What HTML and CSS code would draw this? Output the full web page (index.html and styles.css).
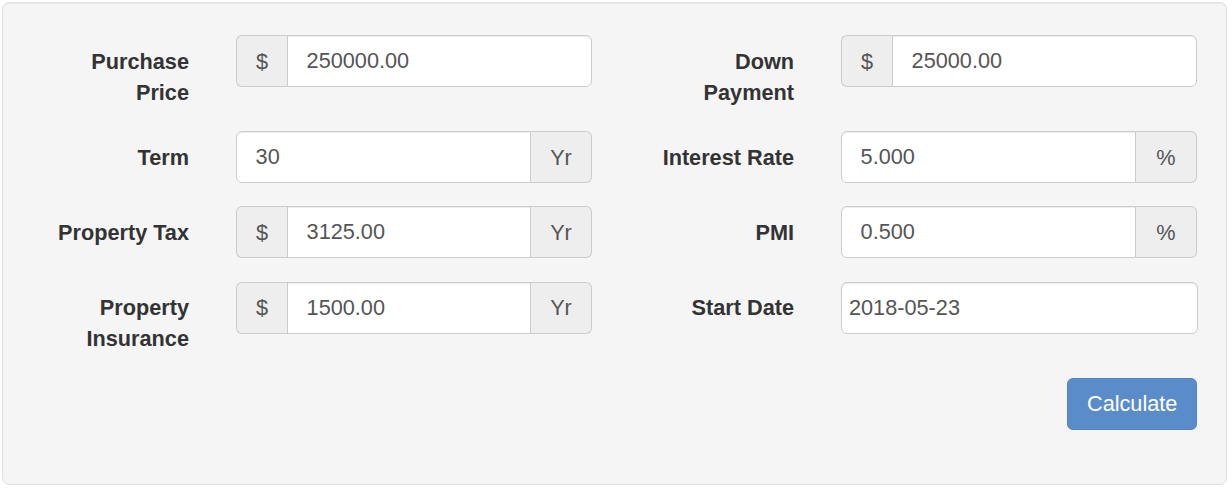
FILE: index.html
```html
<!DOCTYPE html>
<html>
<head>
<meta charset="utf-8">
<link rel="stylesheet" href="styles.css">
</head>
<body>
<form class="well">
  <div class="row">
    <div class="group">
      <label class="lbl">Purchase<br>Price</label>
      <div class="ig"><span class="addon left">$</span><input class="ctl" type="text" value="250000.00"></div>
    </div>
    <div class="group">
      <label class="lbl">Down<br>Payment</label>
      <div class="ig"><span class="addon left">$</span><input class="ctl" type="text" value="25000.00"></div>
    </div>
  </div>
  <div class="row">
    <div class="group">
      <label class="lbl">Term</label>
      <div class="ig"><input class="ctl" type="text" value="30"><span class="addon right yr">Yr</span></div>
    </div>
    <div class="group">
      <label class="lbl">Interest Rate</label>
      <div class="ig"><input class="ctl" type="text" value="5.000"><span class="addon right yr">%</span></div>
    </div>
  </div>
  <div class="row">
    <div class="group">
      <label class="lbl">Property Tax</label>
      <div class="ig"><span class="addon left">$</span><input class="ctl" type="text" value="3125.00"><span class="addon right yr">Yr</span></div>
    </div>
    <div class="group">
      <label class="lbl">PMI</label>
      <div class="ig"><input class="ctl" type="text" value="0.500"><span class="addon right yr">%</span></div>
    </div>
  </div>
  <div class="row">
    <div class="group">
      <label class="lbl">Property<br>Insurance</label>
      <div class="ig"><span class="addon left">$</span><input class="ctl" type="text" value="1500.00"><span class="addon right yr">Yr</span></div>
    </div>
    <div class="group">
      <label class="lbl">Start Date</label>
      <div class="ig date"><input class="ctl solo" type="text" value="2018-05-23"></div>
    </div>
  </div>
  <div class="row actions">
    <button type="button" class="btn">Calculate</button>
  </div>
</form>
</body>
</html>
```

FILE: styles.css
```css
html, body {
  margin: 0;
  padding: 0;
  background: #ffffff;
}
body {
  font-family: "Liberation Sans", Arial, sans-serif;
  font-size: 21.7px;
  line-height: 31px;
  color: #333333;
}
.well {
  box-sizing: border-box;
  width: 1225px;
  margin: 2px 0 0 2px;
  padding: 32px 29px 31px 29px;
  background: #f5f5f5;
  border: 1px solid #e0e0e0;
  border-radius: 7px;
  box-shadow: inset 0 1px 1px rgba(0,0,0,0.05);
}
.row {
  display: flex;
  gap: 45px;
  align-items: flex-start;
}
.group {
  display: grid;
  grid-template-columns: 157px 356px;
  column-gap: 47px;
  align-items: start;
  margin-bottom: 23.25px;
}
.lbl {
  display: block;
  text-align: right;
  font-weight: bold;
  padding-top: 10.85px;
  color: #333333;
}
.ig {
  display: flex;
  height: 52px;
}
.addon {
  box-sizing: border-box;
  flex: 0 0 auto;
  display: flex;
  align-items: center;
  justify-content: center;
  width: 51px;
  height: 52px;
  background: #eeeeee;
  border: 1px solid #cccccc;
  color: #555555;
}
.addon.yr {
  width: 61px;
}
.addon.left {
  border-right: 0;
  border-radius: 6px 0 0 6px;
}
.addon.right {
  border-left: 0;
  border-radius: 0 6px 6px 0;
}
.ctl {
  box-sizing: border-box;
  flex: 1 1 auto;
  min-width: 0;
  width: 100%;
  height: 52px;
  margin: 0;
  padding: 0 18.6px;
  font-family: inherit;
  font-size: 21.7px;
  color: #555555;
  background: #ffffff;
  border: 1px solid #cccccc;
  border-radius: 6px;
  box-shadow: inset 0 1px 1px rgba(0,0,0,0.075);
  outline: none;
}
.addon.left + .ctl {
  border-top-left-radius: 0;
  border-bottom-left-radius: 0;
}
.ig .ctl:not(:last-child) {
  border-top-right-radius: 0;
  border-bottom-right-radius: 0;
}
.ig.date {
  width: 357px;
}
.ctl.solo {
  padding-left: 7px;
}
.actions {
  justify-content: flex-end;
  margin-bottom: 23.25px;
}
.btn {
  box-sizing: border-box;
  height: 52px;
  padding: 0 18.6px;
  font-family: inherit;
  font-size: 21.7px;
  color: #ffffff;
  background: #5b8cca;
  border: 1px solid #5283c4;
  border-radius: 6px;
  cursor: pointer;
}
```
